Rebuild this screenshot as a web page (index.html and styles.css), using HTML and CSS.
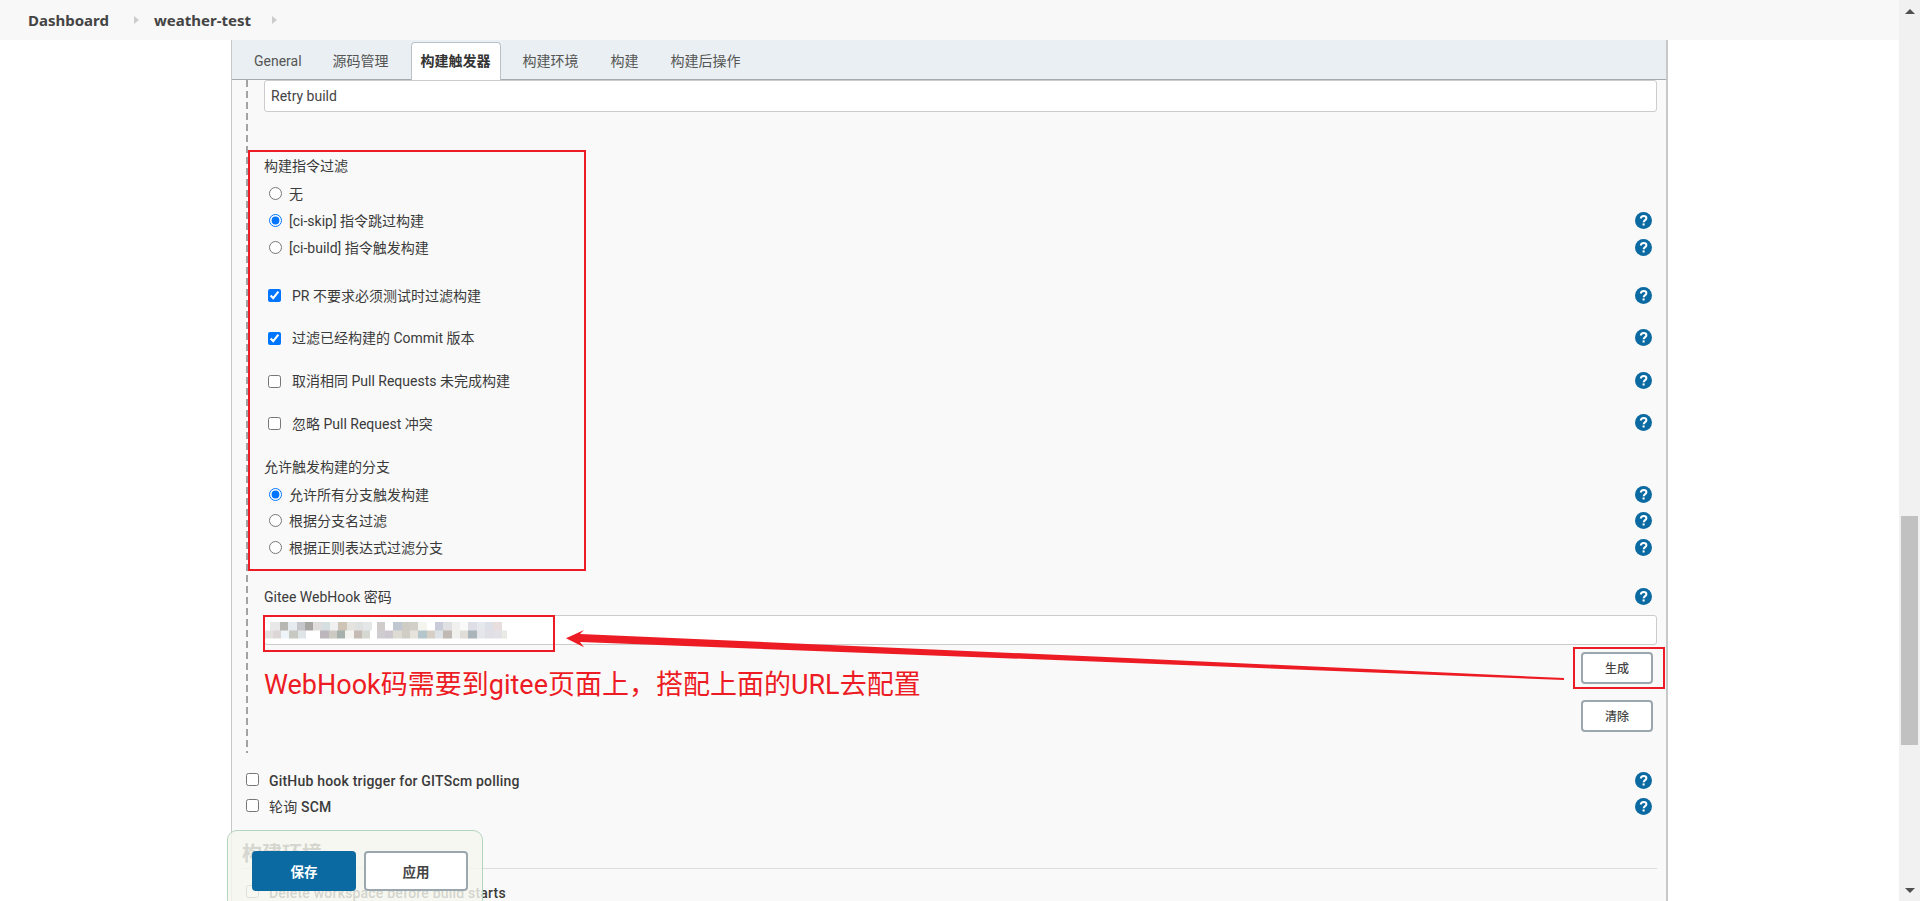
FILE: index.html
```html
<!DOCTYPE html>
<html lang="zh-CN">
<head>
<meta charset="utf-8">
<title>weather-test</title>
<link rel="stylesheet" href="styles.css">
</head>
<body>
<svg class="defs" width="0" height="0" aria-hidden="true"><defs>
<symbol id="help" viewBox="0 0 17 17"><circle cx="8.5" cy="8.5" r="8.5" fill="#0b6aa2"/><path d="M5.8 6.5c.1-1.7 1.2-2.6 2.8-2.6s2.8 .9 2.8 2.3c0 1.9-2.7 1.9-2.7 4" fill="none" stroke="#fff" stroke-width="2"/><rect x="7.6" y="11.4" width="2" height="2.1" fill="#fff"/></symbol>
</defs></svg>
<div class="page">
  <div class="main">
    <header class="crumbs">
      <a class="crumb">Dashboard</a><span class="caret"></span>
      <a class="crumb">weather-test</a><span class="caret"></span>
    </header>
    <section class="panel">
      <nav class="tabs">
        <span class="tab">General</span>
        <span class="tab">源码管理</span>
        <span class="tab active">构建触发器</span>
        <span class="tab">构建环境</span>
        <span class="tab">构建</span>
        <span class="tab">构建后操作</span>
      </nav>
      <div class="form">
        <div class="nested">
          <div class="field-input">Retry build</div>
          <div class="row label-row g1">构建指令过滤</div>
          <label class="row radio"><span class="opt"><input type="radio" name="a"><span>无</span></span></label>
          <label class="row radio"><span class="opt"><input type="radio" name="a" checked><span>[ci-skip] 指令跳过构建</span></span><svg class="help"><use href="#help"/></svg></label>
          <label class="row radio"><span class="opt"><input type="radio" name="a"><span>[ci-build] 指令触发构建</span></span><svg class="help"><use href="#help"/></svg></label>
          <label class="row check first-check"><span class="opt"><input type="checkbox" checked><span>PR 不要求必须测试时过滤构建</span></span><svg class="help"><use href="#help"/></svg></label>
          <label class="row check"><span class="opt"><input type="checkbox" checked><span>过滤已经构建的 Commit 版本</span></span><svg class="help"><use href="#help"/></svg></label>
          <label class="row check"><span class="opt"><input type="checkbox"><span>取消相同 Pull Requests 未完成构建</span></span><svg class="help"><use href="#help"/></svg></label>
          <label class="row check"><span class="opt"><input type="checkbox"><span>忽略 Pull Request 冲突</span></span><svg class="help"><use href="#help"/></svg></label>
          <div class="row label-row g2">允许触发构建的分支</div>
          <label class="row radio thin"><span class="opt"><input type="radio" name="b" checked><span>允许所有分支触发构建</span></span><svg class="help"><use href="#help"/></svg></label>
          <label class="row radio thin"><span class="opt"><input type="radio" name="b"><span>根据分支名过滤</span></span><svg class="help"><use href="#help"/></svg></label>
          <label class="row radio thin"><span class="opt"><input type="radio" name="b"><span>根据正则表达式过滤分支</span></span><svg class="help"><use href="#help"/></svg></label>
          <div class="row label-row g3"><span>Gitee WebHook 密码</span><svg class="help"><use href="#help"/></svg></div>
          <div class="field-input secret"><span class="smear"></span></div>
          <div class="actions">
            <button class="btn" type="button">生成</button>
            <button class="btn" type="button">清除</button>
          </div>
        </div>
        <label class="row top"><span class="opt"><input type="checkbox"><span>GitHub hook trigger for GITScm polling</span></span><svg class="help"><use href="#help"/></svg></label>
        <label class="row top"><span class="opt"><input type="checkbox"><span><span class="plain">轮询</span> SCM</span></span><svg class="help"><use href="#help"/></svg></label>
        <h2 class="section">构建环境</h2>
        <label class="row top"><span class="opt"><input type="checkbox"><span>Delete workspace before build starts</span></span></label>
      </div>
    </section>
  </div>
  <aside class="scrollbar">
    <span class="sb-arrow up"></span>
    <span class="sb-track"><span class="sb-thumb"></span></span>
    <span class="sb-arrow down"></span>
  </aside>

  <div class="mark mark-filter"></div>
  <div class="mark mark-secret"></div>
  <div class="mark mark-generate"></div>
  <svg class="arrow" width="1000" height="52" viewBox="0 0 1000 52" aria-hidden="true">
    <polygon points="0,8.3 18,0 14,4 534,26.8 998,48 998,50 534,31.8 14,12 18,17.3" fill="#ed1c24"/>
  </svg>
  <div class="note">WebHook码需要到gitee页面上，搭配上面的URL去配置</div>
  <div class="savebar">
    <button class="btn-save" type="button">保存</button>
    <button class="btn-apply" type="button">应用</button>
  </div>
</div>
</body>
</html>
```
FILE: styles.css
```css
* { box-sizing: border-box; }
html, body { margin: 0; height: 100%; overflow: hidden; }
body {
  background: #fff;
  color: #333;
  font: 14px/1.2 Roboto, "Noto Sans CJK SC", sans-serif;
}
.defs { position: absolute; }
.page { position: relative; display: flex; height: 901px; overflow: hidden; }
.main { flex: 1; min-width: 0; }

.crumbs {
  display: flex;
  align-items: center;
  height: 40px;
  padding-left: 28px;
  background: #f8f8f8;
}
.crumb { font: 700 15px "Noto Sans", "Noto Sans CJK SC", sans-serif; color: #444; }
.caret {
  width: 0; height: 0;
  margin: 0 15px 0 25px;
  border-left: 5px solid #ccc;
  border-top: 4px solid transparent;
  border-bottom: 4px solid transparent;
}
.caret:last-child { margin-left: 21px; }

.panel {
  width: 1437px;
  height: 861px;
  margin-left: 231px;
  background: #f9f9f9;
  border-left: 1px solid #c8c8c8;
  border-right: 2px solid #c8c8c8;
}
.tabs {
  display: flex;
  align-items: flex-end;
  height: 40px;
  padding-left: 12px;
  gap: 12px;
  background: #e9eff2;
  border-bottom: 1px solid #a2abb1;
}
.tab {
  display: flex;
  align-items: center;
  justify-content: center;
  height: 38px;
  padding: 0 9px;
  margin-bottom: -1px;
  color: #555;
  border: 1px solid transparent;
  border-bottom: 0;
}
.tab:first-child { margin-right: -1px; }
.tab.active {
  background: #fff;
  color: #333;
  font-weight: 700;
  border-color: #b9c2c7;
  border-radius: 4px 4px 0 0;
}

.form { padding: 0 9px 0 16px; }
.nested {
  height: 673px;
  margin-left: -2px;
  padding-left: 18px;
  background: repeating-linear-gradient(180deg, #a3a3a3 0 7px, transparent 7px 11px) left top / 2px 100% no-repeat;
}
.field-input {
  height: 32px;
  padding-left: 6px;
  background: #fff;
  border: 1px solid #ccc;
  border-radius: 3px;
  line-height: 30px;
  color: #444;
}
.secret { position: relative; height: 30px; margin-top: 4px; }
.smear {
  position: absolute;
  left: 0; top: 6px;
  width: 242px;
  height: 17px;
  filter: blur(.7px);
  background-repeat: no-repeat;
  background-size: 100% 50%;
  background-position: left top, left bottom;
  background-image:
    linear-gradient(90deg, #fff 0 5px, #e8e8e8 5px 15px, #b8b6b3 15px 23px, #e6ebef 23px 32px, #c5c6cc 32px 40px, #a8a6a3 40px 48px, #e0dcdc 48px 57px, #d5dee0 57px 65px, #f0f0f0 65px 73px, #cdc4b5 73px 82px, #e5e3de 82px 90px, #dfe0e0 90px 98px, #e5e6e8 98px 107px, #fff 107px 112px, #d0cccc 112px 120px, #fff 120px 128px, #bfc8d0 128px 137px, #cfccc5 137px 145px, #d2cfc8 145px 153px, #f5f5ef 153px 162px, #fff 162px 170px, #c9ccd8 170px 178px, #e0e0e2 178px 187px, #f0f0ee 187px 195px, #fafafa 195px 203px, #dedee6 203px 212px, #e5e8ec 212px 220px, #dde0e6 220px 228px, #e8dede 228px 237px, #fff 237px),
    linear-gradient(90deg, #e5e0e0 0 8px, #dcd6d6 8px 16px, #eef5f8 16px 24px, #c8c8c2 24px 33px, #dfe5e6 33px 41px, #fff 41px 55px, #bdb6bc 55px 64px, #cdc9c3 64px 72px, #a8b0ae 72px 80px, #f5f3f0 80px 89px, #c6bab4 89px 97px, #d5d8d0 97px 105px, #fff 105px 112px, #cfcdd0 112px 120px, #cdc8d0 120px 128px, #dedbd2 128px 137px, #d0cdc5 137px 145px, #e6e2dc 145px 153px, #b5c5cc 153px 162px, #d5cfc6 162px 170px, #dde2e6 170px 178px, #c0b8b2 178px 187px, #f0f0ee 187px 195px, #e0ddd8 195px 203px, #aab5bb 203px 212px, #e5e6ea 212px 220px, #dfdfe5 220px 228px, #e2e2e6 228px 237px, #e8eae4 237px 242px);
}

.row {
  display: flex;
  align-items: center;
  justify-content: space-between;
  height: 27px;
  padding-right: 5.5px;
  color: #3b3b3b;
}
.opt { display: flex; align-items: center; }
.opt input { flex: none; width: 13px; height: 13px; margin: 0 7px 0 5px; }
.opt input[type="checkbox"] { margin: 0 11px 0 4px; }
.radio .opt span { position: relative; top: 1px; }
.help { flex: none; width: 17px; height: 17px; }
.g1 { margin-top: 41px; }
.check { height: 26px; margin-top: 16.67px; }
.check .help { margin-top: -2px; }
.first-check { margin-top: 22px; }
.g2 { margin-top: 17px; }
.thin { height: 26.6px; }
.g3 { height: 26px; margin-top: 24px; }
.g3 .help { margin-top: -2px; }

.actions { display: flex; flex-direction: column; align-items: flex-end; gap: 16px; margin-top: 7px; padding-right: 4px; }
.btn {
  width: 72px; height: 32px;
  padding: 0;
  background: #fff;
  border: 2px solid #9ba7af;
  border-radius: 4px;
  font: 500 12px Roboto, "Noto Sans CJK SC", sans-serif;
  color: #444;
}
.top { height: 26px; }
.top .opt input[type="checkbox"] { margin: 0 10px 0 -2px; }
.top .opt > span { position: relative; top: 1px; font-weight: 500; letter-spacing: .2px; }
.top .opt .plain { font-weight: 400; }
.nested + .top { margin-top: 14px; }
.section {
  height: 31px;
  margin: 19px 0 10px -6px;
  font: 700 20px/33px Roboto, "Noto Sans CJK SC", sans-serif;
  color: #444;
  border-bottom: 1px solid #ddd;
}

.scrollbar { flex: none; display: flex; flex-direction: column; width: 21px; background: #f1f1f1; }
.sb-arrow { flex: none; height: 21px; position: relative; }
.sb-arrow::after {
  content: "";
  position: absolute;
  left: 6px;
  border-left: 5px solid transparent;
  border-right: 5px solid transparent;
}
.up::after { top: 9px; border-bottom: 5px solid #505050; }
.down::after { top: 8px; border-top: 5px solid #505050; }
.sb-track { flex: 1; padding: 495px 2px 0; }
.sb-thumb { display: block; height: 229px; background: #c1c1c1; }

.mark { position: absolute; border: 2px solid #ed1c24; pointer-events: none; }
.mark-filter { left: 248px; top: 150px; width: 338px; height: 421px; }
.mark-secret { left: 263px; top: 615px; width: 292px; height: 37px; }
.mark-generate { left: 1573px; top: 647px; width: 92px; height: 42px; }
.arrow { position: absolute; left: 566px; top: 630px; }
.note {
  position: absolute;
  left: 264px; top: 666px;
  font: 27px/38px Roboto, "Noto Sans CJK SC", sans-serif;
  color: #ed1c24;
  white-space: nowrap;
}
.savebar {
  position: absolute;
  left: 227px; top: 830px;
  display: flex;
  gap: 8px;
  width: 256px;
  height: 80px;
  padding: 20px 0 0 24px;
  background: rgba(245, 247, 238, .82);
  border: 1px solid #b3d4bf;
  border-radius: 10px;
}
.btn-save, .btn-apply {
  width: 104px; height: 40px;
  padding: 0;
  border-radius: 4px;
  font: 700 13.5px Roboto, "Noto Sans CJK SC", sans-serif;
}
.btn-save { background: #0b6aa2; border: 0; color: #fff; }
.btn-apply { background: #fff; border: 2px solid #9ba7af; color: #444; }
```
